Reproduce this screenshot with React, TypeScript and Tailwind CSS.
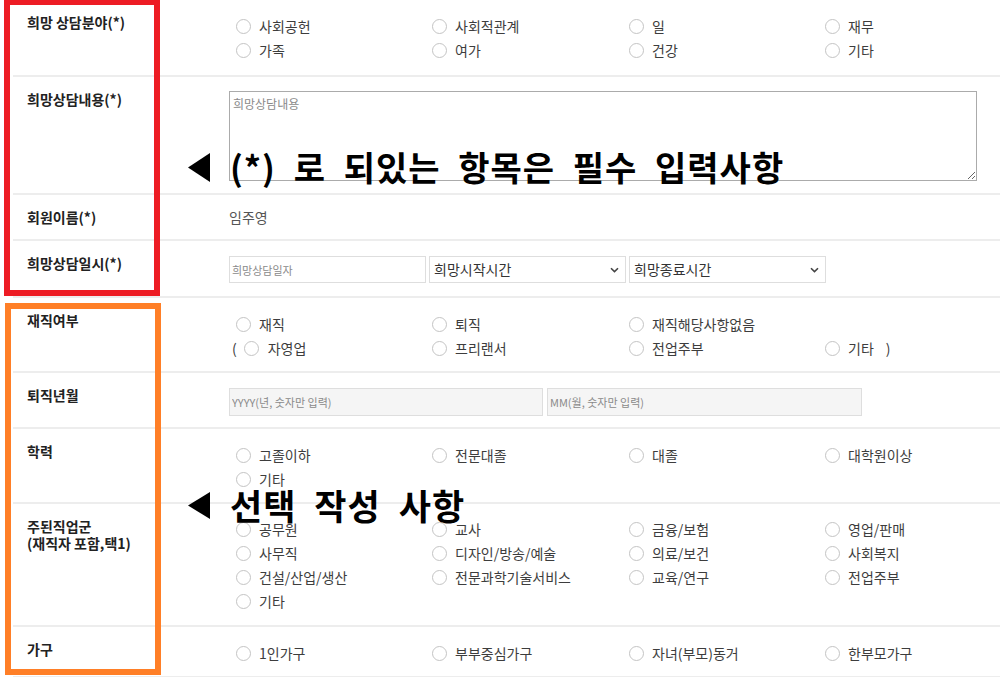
import React from "react";

type Opt = string | null;

const font = { fontFamily: '"Noto Sans CJK KR", "Noto Sans", sans-serif' };

const consultFields: Opt[] = ["사회공헌", "사회적관계", "일", "재무", "가족", "여가", "건강", "기타"];
const education: Opt[] = ["고졸이하", "전문대졸", "대졸", "대학원이상", "기타"];
const jobGroups: Opt[] = [
  "공무원", "교사", "금융/보험", "영업/판매",
  "사무직", "디자인/방송/예술", "의료/보건", "사회복지",
  "건설/산업/생산", "전문과학기술서비스", "교육/연구", "전업주부",
  "기타",
];
const household: Opt[] = ["1인가구", "부부중심가구", "자녀(부모)동거", "한부모가구"];

const Circle = ({ className = "ml-[7px]" }: { className?: string }) => (
  <span className={`${className} h-[15px] w-[15px] shrink-0 rounded-full border border-[#c4c4c4] bg-white`} />
);

const Radio = ({ label }: { label: string }) => (
  <span className="flex items-center">
    <Circle />
    <span className="ml-[8px]">{label}</span>
  </span>
);

const RadioGrid = ({ items }: { items: Opt[] }) => (
  <div className="grid grid-cols-[196px_197px_196px_1fr] text-[14px] leading-[24px] text-[#3d3d3d]">
    {items.map((it, i) => (
      <div key={i} className="h-[24px]">
        {it && <Radio label={it} />}
      </div>
    ))}
  </div>
);

const Row = ({
  label,
  children,
  content = "pt-[14px] pb-[11px]",
}: {
  label: React.ReactNode;
  children: React.ReactNode;
  content?: string;
}) => (
  <div className="flex border-b-2 border-[#ededed]">
    <div className="w-[216px] shrink-0 pl-[14px] pt-[14px] text-[14px] font-bold leading-[17px] text-[#222]">
      {label}
    </div>
    <div className={`flex-1 ${content}`}>{children}</div>
  </div>
);

const Chevron = () => (
  <svg width="9" height="6" viewBox="0 0 9 6" className="shrink-0">
    <path d="M1 1.2 L4.5 4.6 L8 1.2" fill="none" stroke="#444" strokeWidth="1.6" />
  </svg>
);

const FakeSelect = ({ text }: { text: string }) => (
  <div className="flex h-[27px] w-[197px] items-center justify-between border border-[#dedede] bg-white pl-[4px] pr-[6px] text-[14px] text-[#333]">
    <span>{text}</span>
    <Chevron />
  </div>
);

const Triangle = ({ h }: { h: number }) => (
  <svg width="22" height={h} viewBox={`0 0 22 ${h}`} className="shrink-0">
    <polygon points={`22,0 22,${h} 0,${h / 2}`} fill="#000" />
  </svg>
);

export default function App() {
  return (
    <div className="relative h-[677px] w-[1000px] overflow-hidden bg-white" style={font}>
      <div className="ml-[13px]">
        <Row label="희망 상담분야(*)" content="pt-[14px] pb-[13px]">
          <RadioGrid items={consultFields} />
        </Row>

        <Row label="희망상담내용(*)" content="pt-[14px] pb-[12px]">
          <textarea
            readOnly
            placeholder="희망상담내용"
            className="block h-[90px] w-[748px] border border-[#ababab] bg-white px-[3px] py-[4px] text-[12px] leading-[16px] text-[#333] placeholder:text-[#8a8a8a] outline-none"
          />
        </Row>

        <Row label="회원이름(*)" content="pt-[12px] pb-[12px]">
          <div className="text-[14px] leading-[20px] text-[#555]">임주영</div>
        </Row>

        <Row label="희망상담일시(*)" content="pt-[15px] pb-[13px]">
          <div className="flex gap-[3px]">
            <input
              readOnly
              placeholder="희망상담일자"
              className="h-[27px] w-[197px] border border-[#dedede] bg-white px-[2px] text-[11px] placeholder:text-[#8a8a8a] outline-none"
            />
            <FakeSelect text="희망시작시간" />
            <FakeSelect text="희망종료시간" />
          </div>
        </Row>

        <Row label="재직여부">
          <div className="grid grid-cols-[196px_197px_196px_1fr] text-[14px] leading-[24px] text-[#3d3d3d]">
            <div className="h-[24px]"><Radio label="재직" /></div>
            <div className="h-[24px]"><Radio label="퇴직" /></div>
            <div className="h-[24px]"><Radio label="재직해당사항없음" /></div>
            <div className="h-[24px]" />
            <div className="flex h-[24px] items-center">
              <span className="ml-[3px]">(</span>
              <Circle className="ml-[7px]" />
              <span className="ml-[9px]">자영업</span>
            </div>
            <div className="h-[24px]"><Radio label="프리랜서" /></div>
            <div className="h-[24px]"><Radio label="전업주부" /></div>
            <div className="flex h-[24px] items-center">
              <Radio label="기타" />
              <span className="ml-[12px]">)</span>
            </div>
          </div>
        </Row>

        <Row label="퇴직년월" content="pt-[15px] pb-[11px]">
          <div className="flex gap-[4px]">
            <input
              readOnly
              placeholder="YYYY(년, 숫자만 입력)"
              className="h-[28px] w-[314px] border border-[#dedede] bg-[#f5f5f5] px-[2px] text-[11px] placeholder:text-[#8a8a8a] outline-none"
            />
            <input
              readOnly
              placeholder="MM(월, 숫자만 입력)"
              className="h-[28px] w-[315px] border border-[#dedede] bg-[#f5f5f5] px-[2px] text-[11px] placeholder:text-[#8a8a8a] outline-none"
            />
          </div>
        </Row>

        <Row label="학력">
          <RadioGrid items={education} />
        </Row>

        <Row
          label={
            <>
              주된직업군
              <br />
              (재직자 포함,택1)
            </>
          }
          content="pt-[13px] pb-[12px]"
        >
          <RadioGrid items={jobGroups} />
        </Row>

        <Row label="가구">
          <RadioGrid items={household} />
        </Row>
      </div>

      {/* annotation boxes */}
      <div className="absolute left-[4px] top-[-1px] h-[297px] w-[156px] border-[6px] border-[#ed1c24]" />
      <div className="absolute left-[5px] top-[303px] h-[372px] w-[156px] border-[6px] border-[#ff7f27]" />

      <div className="absolute left-[188px] top-[146px] flex h-[42px] items-center">
        <Triangle h={29} />
        <span className="ml-[20px] whitespace-nowrap text-[34px] font-bold leading-[42px] tracking-[1px] text-black [word-spacing:9px]">
          (*) 로 되있는 항목은 필수 입력사항
        </span>
      </div>

      <div className="absolute left-[188px] top-[484px] flex h-[42px] items-center">
        <Triangle h={27} />
        <span className="ml-[20px] whitespace-nowrap text-[35px] font-bold leading-[42px] tracking-[1px] text-black [word-spacing:9px]">
          선택 작성 사항
        </span>
      </div>
    </div>
  );
}
